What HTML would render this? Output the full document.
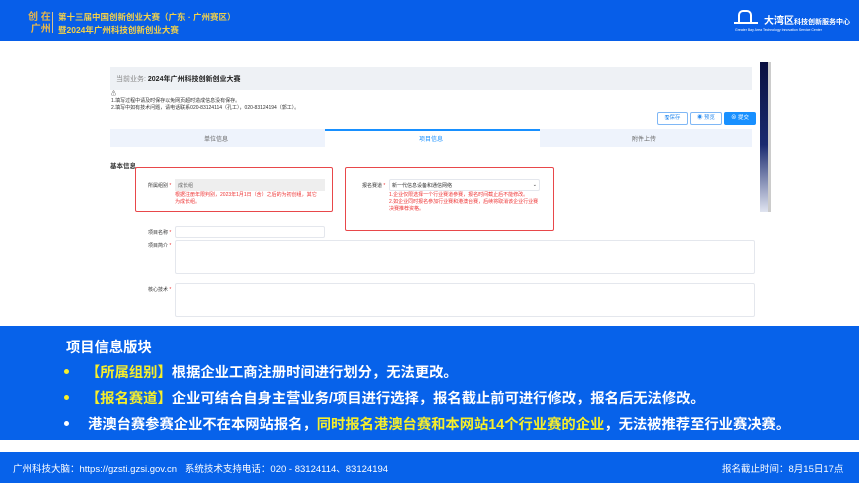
<!DOCTYPE html>
<html><head><meta charset="utf-8"><style>
*{margin:0;padding:0;box-sizing:border-box}
body{width:859px;height:483px;overflow:hidden;background:#fff;font-family:"Liberation Sans","Noto Sans CJK SC",sans-serif;position:relative}
.a{position:absolute}
.top{left:0;top:0;width:859px;height:41px;background:#075ee9}
.gold{color:#f2d14a;font-weight:bold;font-size:8.5px;line-height:13px}
.s{font-size:5px;color:#333;white-space:nowrap}
.r{font-size:5px;color:#e33;line-height:7px}
.box{border:1.5px solid #e8474a;border-radius:2px}
.inp{border:1px solid #e4e7ed;border-radius:2px;background:#fff}
.blue{left:0;top:326px;width:859px;height:114px;background:#0762ea;color:#fff;font-weight:bold}
.ln{position:absolute;font-size:14.3px;white-space:nowrap}
.b{position:absolute;left:64px;width:5px;height:5px;border-radius:50%}
.y{color:#f7ef2a}
</style></head><body>
<div class="a top"></div>
<div class="a" style="left:28px;top:12px;color:#e8b64a;font-size:10px;font-weight:bold;line-height:12px">创 在<br>&nbsp;广州</div>
<div class="a" style="left:52px;top:12px;width:1px;height:21px;background:#d8c28a"></div>
<div class="a gold" style="left:58px;top:11px">第十三届中国创新创业大赛（广东 · 广州赛区）<br>暨2024年广州科技创新创业大赛</div>
<div class="a" style="left:738px;top:10px;width:14px;height:14px;border-left:2px solid #fff;border-right:2px solid #fff;border-top:2px solid #fff;border-radius:5px 5px 0 0"></div>
<div class="a" style="left:734px;top:22px;width:24px;height:2px;background:#fff"></div>
<div class="a" style="left:764px;top:12px;color:#fff;font-weight:bold;font-size:10px;white-space:nowrap">大湾区<span style="font-size:7px">科技创新服务中心</span></div>
<div class="a" style="left:735px;top:28px;color:#fff;font-size:3.5px;white-space:nowrap">Greater Bay Area Technology Innovation Service Center</div>

<div class="a" style="left:110px;top:67px;width:642px;height:23px;background:#eef1f5"></div>
<div class="a" style="left:116px;top:74px;font-size:7px;color:#888">当前业务: <b style="color:#222">2024年广州科技创新创业大赛</b></div>
<div class="a s" style="left:111px;top:91px;line-height:7px">⚠<br>1.填写过程中请及时保存以免网页超时造成信息没有保存。<br>2.填写中如有技术问题，请电话联系020-83124114（孔工），020-83124194（郭工）。</div>
<div class="a" style="left:657px;top:112px;width:31px;height:13px;border:1px solid #7fb7f5;border-radius:2px;color:#2f8ef0;font-size:5.5px;text-align:center;line-height:11px">🖫保存</div>
<div class="a" style="left:690px;top:112px;width:32px;height:13px;border:1px solid #7fb7f5;border-radius:2px;color:#2f8ef0;font-size:5.5px;text-align:center;line-height:11px">◉ 预览</div>
<div class="a" style="left:724px;top:112px;width:32px;height:13px;background:#1890ff;border-radius:2px;color:#fff;font-size:5.5px;text-align:center;line-height:13px">⊗ 提交</div>
<div class="a" style="left:760px;top:62px;width:8px;height:150px;background:linear-gradient(#0a1040,#1a2a70 55%,#e0e4f0);"></div>
<div class="a" style="left:768px;top:62px;width:3px;height:150px;background:#ccc"></div>

<div class="a" style="left:110px;top:129px;width:642px;height:18px;background:#eef3fc"></div>
<div class="a" style="left:325px;top:129px;width:215px;height:18px;background:#fff;border-top:2px solid #1890ff"></div>
<div class="a" style="left:204px;top:134px;font-size:6px;color:#666">单位信息</div>
<div class="a" style="left:419px;top:134px;font-size:6px;color:#1890ff">项目信息</div>
<div class="a" style="left:632px;top:134px;font-size:6px;color:#666">附件上传</div>
<div class="a" style="left:110px;top:160px;font-size:6.5px;font-weight:bold;color:#333">基本信息</div>

<div class="a box" style="left:135px;top:167px;width:198px;height:45px"></div>
<div class="a s" style="left:148px;top:182px">所属组别 <span style="color:#e33">*</span></div>
<div class="a" style="left:175px;top:179px;width:150px;height:12px;background:#eeeeee;font-size:5px;color:#666;padding:3px 3px">成长组</div>
<div class="a r" style="left:175px;top:192px;width:145px">根据注册年限判别，2023年1月1日（含）之后的为初创组，其它为成长组。</div>

<div class="a box" style="left:345px;top:167px;width:209px;height:64px"></div>
<div class="a s" style="left:362px;top:182px">报名赛道 <span style="color:#e33">*</span></div>
<div class="a inp" style="left:389px;top:179px;width:151px;height:12px;font-size:5px;color:#333;padding:2px 2px">新一代信息设备和通信网络<span style="float:right">⌄</span></div>
<div class="a r" style="left:389px;top:192px;width:150px">1.企业仅限选择一个行业赛道参赛，报名时间截止后不能修改。<br>2.如企业同时报名参加行业赛和港澳台赛，后续将取消该企业行业赛决赛推荐资格。</div>

<div class="a s" style="left:148px;top:229px">项目名称 <span style="color:#e33">*</span></div>
<div class="a inp" style="left:175px;top:226px;width:150px;height:12px"></div>
<div class="a s" style="left:148px;top:242px">项目简介 <span style="color:#e33">*</span></div>
<div class="a inp" style="left:175px;top:240px;width:580px;height:34px"></div>
<div class="a s" style="left:148px;top:286px">核心技术 <span style="color:#e33">*</span></div>
<div class="a inp" style="left:175px;top:283px;width:580px;height:34px"></div>

<div class="a blue">
<div class="ln" style="top:10px;left:66px">项目信息版块</div>
<div class="b" style="top:43px;background:#f7ef2a"></div><div class="ln" style="top:35px;left:86px"><span class="y">【所属组别】</span>根据企业工商注册时间进行划分，无法更改。</div>
<div class="b" style="top:69px;background:#f7ef2a"></div><div class="ln" style="top:61px;left:86px"><span class="y">【报名赛道】</span>企业可结合自身主营业务/项目进行选择，报名截止前可进行修改，报名后无法修改。</div>
<div class="b" style="top:95px;background:#fff"></div><div class="ln" style="top:87px;left:88px">港澳台赛参赛企业不在本网站报名，<span class="y">同时报名港澳台赛和本网站14个行业赛的企业</span>，无法被推荐至行业赛决赛。</div>
</div>
<div class="a" style="left:0;top:452px;width:859px;height:31px;background:#0762ea"></div>
<div class="a" style="left:13px;top:461px;color:#fff;font-size:9.5px;white-space:nowrap">广州科技大脑：https://gzsti.gzsi.gov.cn&nbsp;&nbsp;&nbsp;系统技术支持电话：020 - 83124114、83124194</div>
<div class="a" style="left:722px;top:461px;color:#fff;font-size:9.5px;white-space:nowrap">报名截止时间：8月15日17点</div>
</body></html>
